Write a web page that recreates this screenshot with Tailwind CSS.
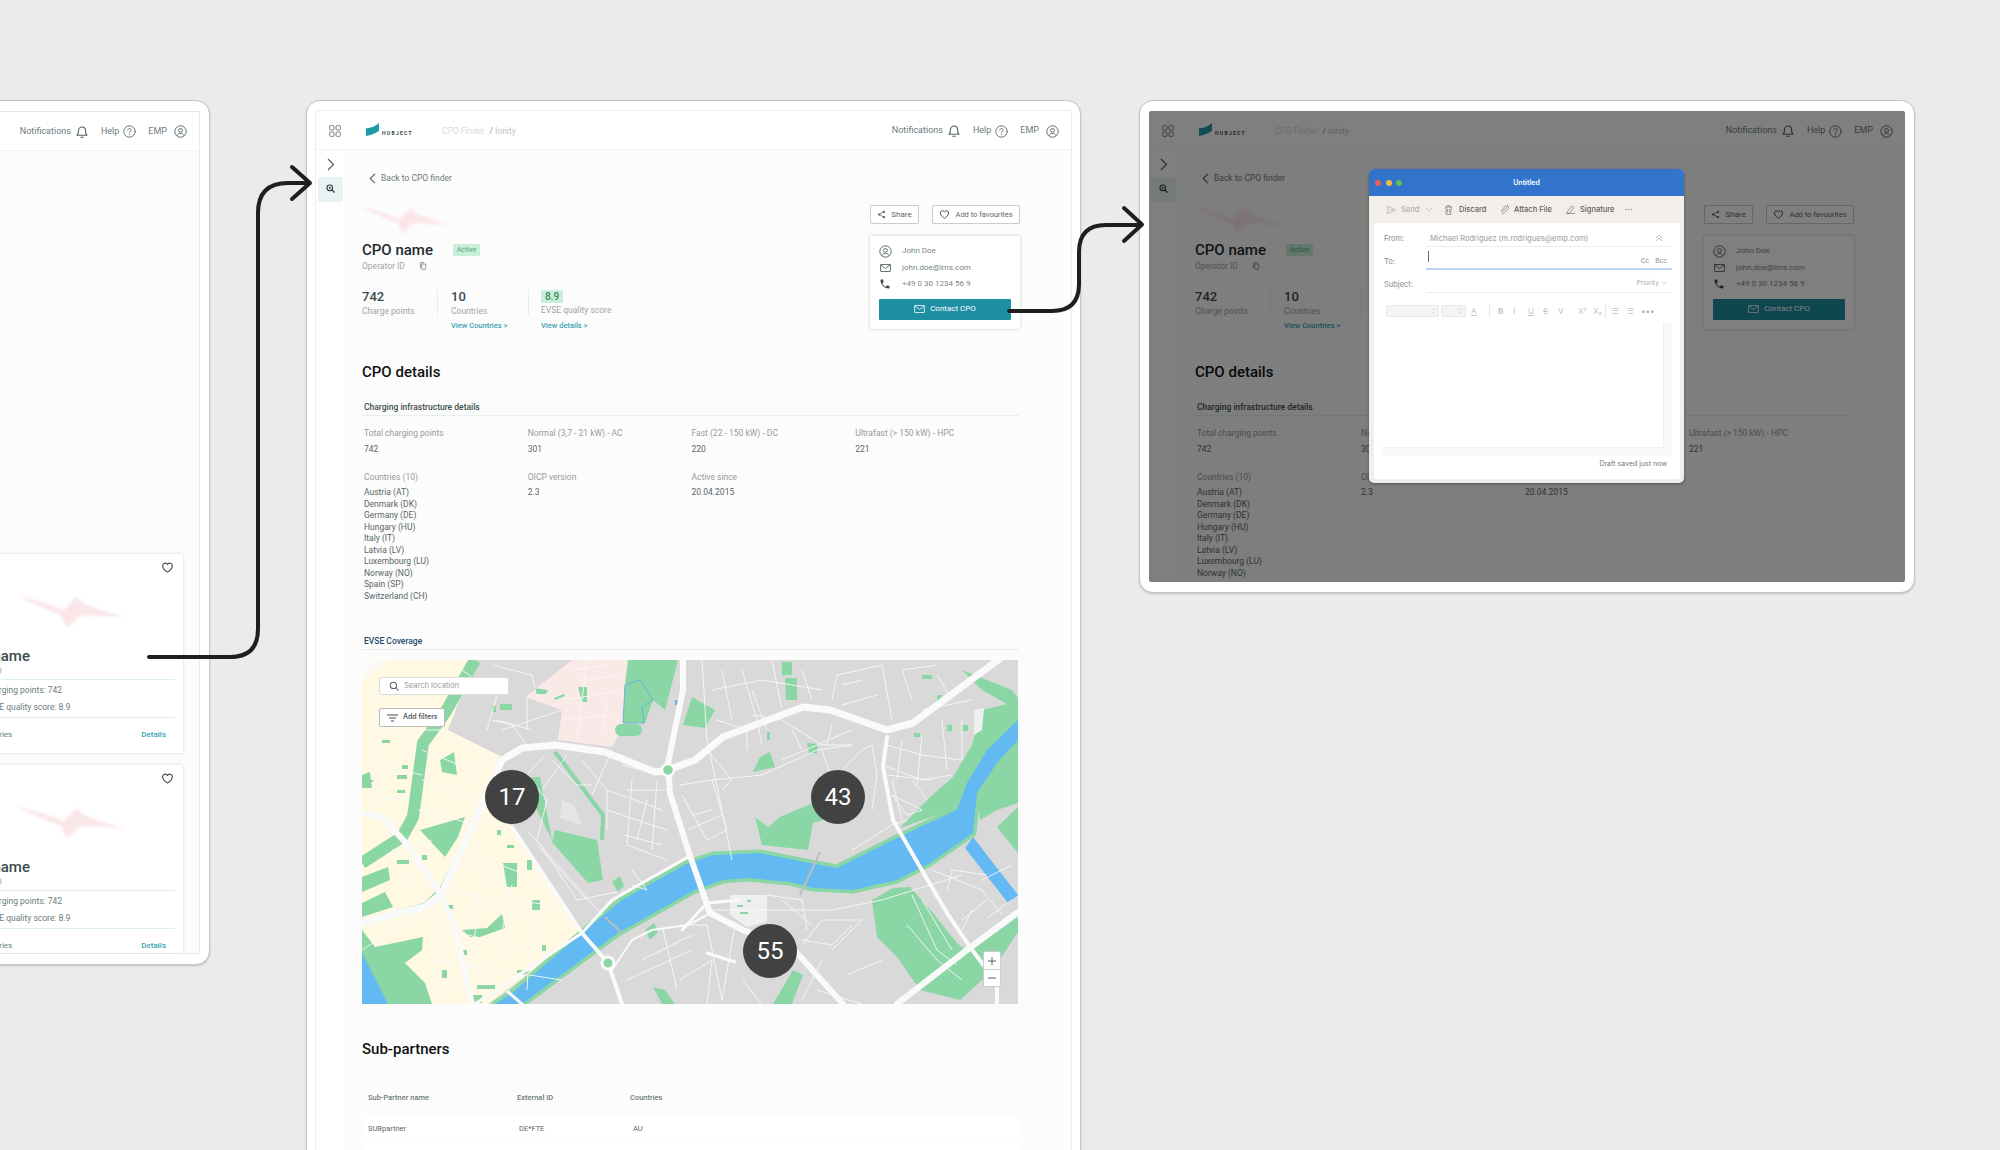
<!DOCTYPE html>
<html>
<head>
<meta charset="utf-8">
<script src="https://cdn.jsdelivr.net/npm/@tailwindcss/browser@4"></script>
</head>
<body class="m-0 bg-[#ebebeb] font-['Roboto',sans-serif]">
<svg class="absolute w-0 h-0">
  <symbol id="i-grid" viewBox="0 0 12 12"><g fill="none" stroke="#6b7476" stroke-width="0.9"><rect x="0.6" y="0.6" width="4.4" height="4.4" rx="1.2"/><rect x="7" y="0.6" width="4.4" height="4.4" rx="1.2"/><rect x="0.6" y="7" width="4.4" height="4.4" rx="1.2"/><rect x="7" y="7" width="4.4" height="4.4" rx="1.2"/></g></symbol>
  <symbol id="i-bell" viewBox="0 0 24 24"><g fill="none" stroke="#52605f" stroke-width="1.9" stroke-linecap="round" stroke-linejoin="round"><path d="M6 9.5a6 6 0 0 1 12 0c0 6 2.5 8 2.5 8h-17S6 15.500 6 9.500"/><path d="M10 21h4"/></g></symbol>
  <symbol id="i-help" viewBox="0 0 24 24"><g fill="none" stroke="#52605f" stroke-width="1.6" stroke-linecap="round"><circle cx="12" cy="12" r="10.500"/><path d="M9 9.300a3 3 0 1 1 4.500 2.600c-1 .6-1.500 1.200-1.500 2.300"/></g><circle cx="12" cy="17.300" r="1" fill="#52605f"/></symbol>
  <symbol id="i-user" viewBox="0 0 24 24"><g fill="none" stroke="#52605f" stroke-width="1.700"><circle cx="12" cy="12" r="10.500"/><circle cx="12" cy="10" r="3.500"/><path d="M5.500 19.500c1.500-2.700 3.800-4 6.500-4s5 1.300 6.500 4"/></g></symbol>
  <symbol id="i-heart" viewBox="0 0 24 24"><path d="M12 20.500S3 15 3 8.800A4.800 4.800 0 0 1 12 6.500a4.800 4.800 0 0 1 9 2.300C21 15 12 20.500 12 20.500z" fill="none" stroke="#3b4648" stroke-width="2" stroke-linejoin="round"/></symbol>
  <symbol id="i-share" viewBox="0 0 24 24"><g fill="none" stroke="#52605f" stroke-width="2"><path d="M18 5 6 12l12 7"/></g><g fill="#52605f"><circle cx="18.500" cy="5" r="3"/><circle cx="5.500" cy="12" r="3"/><circle cx="18.500" cy="19" r="3"/></g></symbol>
  <symbol id="i-mail" viewBox="0 0 24 18"><g fill="none" stroke="currentColor" stroke-width="1.800"><rect x="1" y="1" width="22" height="16" rx="1"/><path d="m1.500 2 10.500 8 10.500-8"/></g></symbol>
  <symbol id="i-phone" viewBox="0 0 24 24"><path fill="#3b4648" d="M6.620 10.790c1.440 2.830 3.760 5.140 6.590 6.590l2.200-2.200c.27-.27.67-.36 1.020-.24 1.120.37 2.330.57 3.570.57.55 0 1 .45 1 1V20c0 .55-.45 1-1 1-9.390 0-17-7.610-17-17 0-.55.45-1 1-1h3.500c.55 0 1 .45 1 1 0 1.250.2 2.450.57 3.570.11.35.03.74-.25 1.020l-2.200 2.200z"/></symbol>
  <symbol id="i-copy" viewBox="0 0 24 24"><g fill="none" stroke="#6b7476" stroke-width="2.200"><rect x="8" y="6" width="12" height="16" rx="1.500"/><path d="M4 18V2h11"/></g></symbol>
  <symbol id="i-zoom" viewBox="0 0 24 24"><g fill="none" stroke="#2d3a3c" stroke-width="3" stroke-linecap="round"><circle cx="10" cy="10" r="7.500"/><path d="m16 16 6 6"/></g><circle cx="10" cy="10" r="2.500" fill="#2d3a3c"/></symbol>
  <symbol id="i-bird" viewBox="0 0 88 30"><path fill="#fbe6e9" d="M0 3C14 8 28 11 38 16 42 12 46 7 49 5 53 13 70 16 88 22 72 21 58 20 50 21 47 25 44 28 41 30 38 27 38 23 36 20 24 15 9 10 0 3Z"/></symbol>
  <symbol id="i-logo" viewBox="0 0 13 13"><path fill="#1e9aa6" d="M0 5.500C5 5 10 3 13 0v8C9 10.500 5 12 0 13z"/></symbol>
  <symbol id="i-updown" viewBox="0 0 5 8"><path d="M1 3 2.500 1.500 4 3M1 5l1.500 1.500L4 5" fill="none" stroke="#c4c4c4" stroke-width="0.600"/></symbol>
</svg>

<div class="relative w-[2000px] h-[1150px] overflow-hidden bg-[#ebebeb]">

  <!-- LEFT FRAME -->
  <div class="absolute left-[-100px] top-[100px] w-[310px] h-[865px] bg-white rounded-[14px] border border-[#c6c6c6] shadow-[0_1px_2px_rgba(0,0,0,0.2)] px-[9px] py-[10px]">
    <div class="w-full h-full border border-[#e8e8e8] bg-[#fcfcfc] overflow-hidden flex flex-col">
      <div class="h-[39px] shrink-0 bg-white border-b border-[#f2f2f2] flex items-center justify-end pr-[12px] pt-[1px] text-[9px] text-[#6e7b7d]">
        <span>Notifications</span><svg class="ml-[4px] w-[14px] h-[14px]"><use href="#i-bell"/></svg>
        <span class="ml-[12px]">Help</span><svg class="ml-[4px] w-[13px] h-[13px]"><use href="#i-help"/></svg>
        <span class="ml-[12px]">EMP</span><svg class="ml-[7px] w-[13px] h-[13px]"><use href="#i-user"/></svg>
      </div>
      <div class="flex-1 flex flex-col items-end pr-[16px] pt-[403px] gap-[12px]">
        <div class="shrink-0 w-[233px] h-[199px] bg-white rounded-[2px] shadow-[0_0_3px_rgba(0,0,0,0.18)]">
          <div class="h-[30px] flex justify-end items-center pr-[9px] pb-[3px]"><svg class="w-[13px] h-[13px]"><use href="#i-heart"/></svg></div>
          <svg class="ml-[67px] mt-[4px] w-[108px] h-[42px] blur-[1.5px]"><use href="#i-bird"/></svg>
          <div class="pl-[9px] mt-[16px] h-[20px] leading-[20px] text-[15px] font-medium text-[#3d4a4c] whitespace-nowrap">CPO name</div>
          <div class="pl-[9px] h-[10px] leading-[10px] text-[8.5px] text-[#a5a5a5] whitespace-nowrap">Operator ID</div>
          <div class="ml-[9px] mr-[8px] mt-[3px] border-t border-[#dceff2]"></div>
          <div class="pl-[34px] mt-[4px] h-[12px] leading-[12px] text-[8.5px] text-[#6e7b7d] whitespace-nowrap">Charging points: 742</div>
          <div class="pl-[34px] mt-[5px] h-[12px] leading-[12px] text-[8.5px] text-[#6e7b7d] whitespace-nowrap">EVSE quality score: 8.9</div>
          <div class="ml-[9px] mr-[8px] mt-[4px] border-t border-[#dceff2]"></div>
          <div class="pl-[9px] pr-[17px] mt-[11px] h-[12px] leading-[12px] text-[8px] flex justify-between whitespace-nowrap"><span class="text-[#6e7b7d] pl-[8px]">10 Countries</span><span class="text-[#3aa3b5] font-medium">Details</span></div>
        </div>
        <div class="shrink-0 w-[233px] h-[199px] bg-white rounded-[2px] shadow-[0_0_3px_rgba(0,0,0,0.18)]">
          <div class="h-[30px] flex justify-end items-center pr-[9px] pb-[3px]"><svg class="w-[13px] h-[13px]"><use href="#i-heart"/></svg></div>
          <svg class="ml-[67px] mt-[4px] w-[108px] h-[42px] blur-[1.5px]"><use href="#i-bird"/></svg>
          <div class="pl-[9px] mt-[16px] h-[20px] leading-[20px] text-[15px] font-medium text-[#3d4a4c] whitespace-nowrap">CPO name</div>
          <div class="pl-[9px] h-[10px] leading-[10px] text-[8.5px] text-[#a5a5a5] whitespace-nowrap">Operator ID</div>
          <div class="ml-[9px] mr-[8px] mt-[3px] border-t border-[#dceff2]"></div>
          <div class="pl-[34px] mt-[4px] h-[12px] leading-[12px] text-[8.5px] text-[#6e7b7d] whitespace-nowrap">Charging points: 742</div>
          <div class="pl-[34px] mt-[5px] h-[12px] leading-[12px] text-[8.5px] text-[#6e7b7d] whitespace-nowrap">EVSE quality score: 8.9</div>
          <div class="ml-[9px] mr-[8px] mt-[4px] border-t border-[#dceff2]"></div>
          <div class="pl-[9px] pr-[17px] mt-[11px] h-[12px] leading-[12px] text-[8px] flex justify-between whitespace-nowrap"><span class="text-[#6e7b7d] pl-[8px]">10 Countries</span><span class="text-[#3aa3b5] font-medium">Details</span></div>
        </div>
      </div>
    </div>
  </div>

  <!-- MIDDLE FRAME -->
  <div class="absolute left-[306px] top-[100px] w-[775px] h-[1100px] bg-white rounded-[14px] border border-[#c6c6c6] shadow-[0_1px_2px_rgba(0,0,0,0.2)] px-[9px] py-[10px]">
    <div class="w-full h-full outline outline-[#eeeeee] bg-[#fcfcfc] overflow-hidden flex flex-col">
      <div class="h-[39px] shrink-0 bg-white border-b border-[#f2f2f2] flex items-center pl-[13px] pr-[12px] pt-[2px] text-[9px] text-[#6e7b7d]">
        <svg class="w-[12px] h-[12px]"><use href="#i-grid"/></svg>
        <svg class="ml-[25px] w-[13px] h-[13px] mb-[3px]"><use href="#i-logo"/></svg>
        <span class="ml-[3px] mt-[5px] w-[35px] text-[5px] font-bold tracking-[1.3px] text-[#33464a] whitespace-nowrap">HUBJECT</span>
        <span class="ml-[25px] text-[8.5px] text-[#dadada] whitespace-nowrap">CPO Finder</span><span class="ml-[5px] text-[8.5px] text-[#888888]">/</span><span class="ml-[2px] text-[8.5px] text-[#c4c4c4]">Ionity</span>
        <span class="ml-auto">Notifications</span><svg class="ml-[4px] w-[14px] h-[14px]"><use href="#i-bell"/></svg>
        <span class="ml-[12px]">Help</span><svg class="ml-[4px] w-[13px] h-[13px]"><use href="#i-help"/></svg>
        <span class="ml-[12px]">EMP</span><svg class="ml-[7px] w-[13px] h-[13px]"><use href="#i-user"/></svg>
      </div>
      <div class="flex-1 flex">
        <div class="w-[29px] shrink-0 bg-white flex flex-col items-center pt-[8px]">
          <svg class="w-[9px] h-[13px]" viewBox="0 0 9 13"><path d="m2 1 5.500 5.500L2 12" fill="none" stroke="#52605f" stroke-width="1.200"/></svg>
          <div class="mt-[6px] w-[25px] h-[25px] bg-[#e8f2f2] rounded-[2px] flex items-center justify-center pb-[2px]"><svg class="w-[9px] h-[9px]"><use href="#i-zoom"/></svg></div>
        </div>
        <div class="flex-1 pl-[17px] pr-[52px] text-[8.5px]">
          <div class="h-[161px] mt-[21px] flex justify-between">
            <div>
              <div class="h-[14px] flex items-center pl-[7px] text-[#6e7b7d]"><svg class="w-[7px] h-[11px]" viewBox="0 0 7 11"><path d="M6 .8 1.200 5.500 6 10.200" fill="none" stroke="#52605f" stroke-width="1.100"/></svg><span class="ml-[5px] whitespace-nowrap">Back to CPO finder</span></div>
              <svg class="mt-[18px] w-[88px] h-[30px] blur-[1.5px]"><use href="#i-bird"/></svg>
              <div class="mt-[7px] h-[20px] flex items-center"><span class="text-[15px] font-medium text-[#1f2b2e] whitespace-nowrap">CPO name</span><span class="ml-[20px] h-[12px] w-[27px] bg-[#c9eeda] rounded-[1px] text-center text-[7px] leading-[12px] text-[#6cb58c] font-medium">Active</span></div>
              <div class="h-[12px] flex items-center text-[#a5a5a5]"><span class="whitespace-nowrap">Operator ID</span><svg class="ml-[14px] w-[8px] h-[8px]"><use href="#i-copy"/></svg></div>
              <div class="mt-[18px] flex whitespace-nowrap">
                <div class="w-[76px]"><div class="h-[26px] border-r border-[#e6eeee]"><div class="h-[14px] leading-[14px] text-[13px] font-medium text-[#3d4a4c]">742</div><div class="h-[12px] leading-[14px] text-[#a5a5a5]">Charge points</div></div></div>
                <div class="w-[91px] pl-[13px] relative"><div class="h-[26px] border-r border-[#e6eeee]"><div class="h-[14px] leading-[14px] text-[13px] font-medium text-[#3d4a4c]">10</div><div class="h-[12px] leading-[14px] text-[#a5a5a5]">Countries</div></div><div class="mt-[4px] h-[12px] leading-[12px] text-[7.5px] text-[#3aa3b5] font-medium">View Countries &gt;</div></div>
                <div class="pl-[12px]"><div class="h-[26px]"><div class="h-[13px] w-[22px] bg-[#c9eeda] rounded-[1px] text-center leading-[13px] text-[10px] font-medium text-[#3d8b5e]">8.9</div><div class="h-[13px] leading-[15px] text-[#a5a5a5]">EVSE quality score</div></div><div class="mt-[4px] h-[12px] leading-[12px] text-[7.5px] text-[#3aa3b5] font-medium">View details &gt;</div></div>
              </div>
            </div>
            <div class="w-[150px] -mr-[1px] mt-[34px]">
              <div class="flex justify-between h-[19px] text-[#5a6668] whitespace-nowrap">
                <div class="w-[49px] bg-white border border-[#cccccc] rounded-[1px] flex items-center justify-center gap-[5px] text-[8px]"><svg class="w-[9px] h-[9px]"><use href="#i-share"/></svg>Share</div>
                <div class="w-[88px] bg-white border border-[#cccccc] rounded-[1px] flex items-center justify-center gap-[5px] text-[7.5px]"><svg class="w-[11px] h-[11px]"><use href="#i-heart"/></svg>Add to favourites</div>
              </div>
              <div class="mt-[12px] h-[93px] bg-white rounded-[1px] shadow-[0_0_3px_rgba(0,0,0,0.22)] px-[9px] pt-[7px] text-[8px] text-[#7a8688]">
                <div class="h-[16.500px] flex items-center"><svg class="w-[13px] h-[13px]"><use href="#i-user"/></svg><span class="ml-[10px]">John Doe</span></div>
                <div class="h-[16.500px] flex items-center text-[#3b4648]"><svg class="ml-[1px] w-[11px] h-[8px]"><use href="#i-mail"/></svg><span class="ml-[11px] text-[#7a8688]">john.doe@lms.com</span></div>
                <div class="h-[16.500px] flex items-center"><svg class="w-[12px] h-[12px]"><use href="#i-phone"/></svg><span class="ml-[11px]">+49 0 30 1234 56 9</span></div>
                <div class="mt-[6px] h-[21px] bg-[#1f8fa3] rounded-[1px] flex items-center justify-center gap-[5px] text-white text-[8px]"><svg class="w-[11px] h-[8px]"><use href="#i-mail"/></svg>Contact CPO</div>
              </div>
            </div>
          </div>

          <div class="mt-[30px] h-[20px] leading-[20px] text-[15px] font-medium text-[#111111]">CPO details</div>
          <div class="mt-[19px] h-[15px] leading-[12px] pl-[2px] border-b border-[#e6eeee] font-medium text-[#3d4d50]">Charging infrastructure details</div>
          <div class="mt-[11px] grid grid-cols-4 pl-[2px] leading-[12px] text-[#9a9a9a]"><div>Total charging points</div><div>Normal (3,7 - 21 kW) - AC</div><div>Fast (22 - 150 kW) - DC</div><div>Ultrafast (&gt; 150 kW) - HPC</div></div>
          <div class="mt-[4px] grid grid-cols-4 pl-[2px] leading-[12px] text-[#5a6668]"><div>742</div><div>301</div><div>220</div><div>221</div></div>
          <div class="mt-[16px] grid grid-cols-4 pl-[2px] leading-[12px] text-[#9a9a9a]"><div>Countries (10)</div><div>OICP version</div><div>Active since</div></div>
          <div class="mt-[4px] grid grid-cols-4 pl-[2px] leading-[11.500px] text-[#5a6668]"><div>Austria (AT)<br>Denmark (DK)<br>Germany (DE)<br>Hungary (HU)<br>Italy (IT)<br>Latvia (LV)<br>Luxembourg (LU)<br>Norway (NO)<br>Spain (SP)<br>Switzerland (CH)</div><div>2.3</div><div>20.04.2015</div></div>
          <div class="mt-[33px] h-[15px] leading-[12px] pl-[2px] border-b border-[#e6eeee] font-medium text-[#1f4a6b]">EVSE Coverage</div>

          <div class="relative mt-[10px] w-[656px] h-[344px] overflow-hidden bg-[#d9d9d9]">
            <svg class="absolute inset-0" width="656" height="344" viewBox="0 0 656 344">
              <polygon fill="#f9e9e7" points="163,37 210,0 270,0 263,63 250,87 196,80 200,50"/>
              <polygon fill="#fff8e3" points="0,0 113,0 86,70 140,97 123,133 150,167 220,273 126,344 0,344"/>
              <polygon fill="#fbfbf6" points="0,0 28,0 0,20"/>
              <g fill="#8ad7a5">
                <polygon points="58,170 103,157 96,177 83,197"/>
                <polygon points="0,217 26,207 28,220 0,232"/>
                <polygon points="0,243 23,232 31,247 0,257"/>
                <polygon points="0,270 13,287 61,277 60,290 43,303 63,323 70,344 26,344 0,297"/>
                <polygon points="141,203 155,203 155,227 145,227"/>
                <polygon points="100,270 125,268 140,254 143,268 118,277 108,277"/>
                <polygon points="78,100 92,92 95,115 80,112"/>
                <polygon points="0,115 8,112 10,128 0,128"/>
                <rect x="4" y="120" width="8" height="2"/><rect x="35" y="115" width="10" height="4"/><rect x="35" y="130" width="8" height="3"/><rect x="20" y="80" width="8" height="3"/><rect x="40" y="105" width="6" height="4"/>
                <rect x="35" y="200" width="12" height="4"/><rect x="60" y="195" width="5" height="5"/><rect x="145" y="185" width="7" height="3"/><rect x="165" y="200" width="5" height="10"/><rect x="170" y="240" width="8" height="10"/><rect x="100" y="290" width="5" height="5"/><rect x="80" y="310" width="5" height="8"/><rect x="115" y="325" width="18" height="4"/><rect x="110" y="335" width="10" height="8"/><rect x="195" y="305" width="5" height="8"/><rect x="180" y="285" width="4" height="6"/><rect x="155" y="310" width="12" height="5"/><rect x="85" y="245" width="6" height="4"/><rect x="135" y="170" width="4" height="5"/>
                <polygon points="170,117 178,117 190,180 175,150"/>
                <polygon points="190,182 193,170 235,180 241,220 226,223"/>
                <polygon points="266,0 316,0 303,50 291,40 283,63 261,63 263,25"/>
                <rect x="253" y="64" width="27" height="12" rx="6"/>
                <polygon points="216,27 225,27 225,42 220,42"/>
                <polygon points="192,38 202,34 203,36 193,40"/>
                <polygon points="172,28 186,30 184,34 174,34"/>
                <rect x="130" y="46" width="4" height="6"/><rect x="138" y="44" width="12" height="6"/>
                <polygon points="250,222 258,216 262,226 256,232"/>
                <polygon points="393,157 406,167 418,157 451,143 461,160 451,163 446,190 400,185"/>
                <polygon points="538,168 568,137 591,117 610,85 620,50 645,44 620,30 600,10 650,30 656,38 656,80 625,90 590,150"/>
                <polygon points="615,133 656,80 656,143 635,150 618,160"/>
                <polygon points="635,167 656,147 656,193"/>
                <polygon points="510,240 531,228 548,227 571,253 595,283 611,297 631,310 598,340 558,330 535,297 515,277"/>
                <polygon points="605,293 656,257 656,272 631,310"/>
                <polygon points="431,310 441,315 430,344 411,344"/>
                <polygon points="330,37 353,50 343,68 321,65"/>
                <polygon points="423,18 435,18 435,40 424,40"/>
                <polygon points="420,2 430,2 430,15 420,15"/>
                <polygon points="391,112 398,97 408,92 413,107"/>
                <polygon points="445,83 456,84 455,93 447,93"/>
                <polygon points="283,270 292,263 296,272 288,280"/>
                <polygon points="291,327 303,330 313,344 300,344"/>
                <rect x="575" y="35" width="5" height="6"/><rect x="585" y="65" width="5" height="6"/><rect x="552" y="73" width="6" height="4"/><rect x="560" y="15" width="10" height="4"/><rect x="405" y="72" width="3" height="8"/><rect x="600" y="65" width="6" height="6"/>
              </g>
              <g fill="none" stroke="#8ad7a5" stroke-linejoin="round">
                <polyline stroke-width="12" points="113,0 83,53 61,83 51,157 40,177 0,203"/>
                <polyline stroke-width="4" points="193,92 241,155 240,180"/>
                <polyline stroke-width="4" points="113,160 80,228 63,245 35,252"/>
                <polygon stroke-width="7" points="133,344 150,333 220,273 260,240 326,203 351,195 398,193 448,203 475,208 505,193 535,178 558,167 595,150 605,123 625,90 656,60 656,80 635,103 615,133 611,173 591,187 568,203 535,220 491,230 451,228 428,222 385,218 361,220 333,230 256,273 160,344"/>
              </g>
              <g fill="#63b9f1">
                <polygon points="133,344 150,333 220,273 260,240 326,203 351,195 398,193 448,203 475,208 505,193 535,178 558,167 595,150 605,123 625,90 656,60 656,80 635,103 615,133 611,173 591,187 568,203 535,220 491,230 451,228 428,222 385,218 361,220 333,230 256,273 160,344"/>
                <polygon points="603,188 611,177 656,235 646,243"/>
                <polygon points="0,293 26,344 0,344"/>
                <rect x="313" y="40" width="7" height="5"/>
              </g>
              <polygon points="263,25 278,20 291,40 280,47 282,63 261,63" fill="#8ad7a5" stroke="#5ba8ee" stroke-width="0.800"/>
              <polygon points="368,235 405,235 405,262 385,267 368,255" fill="#eef0ef"/>
              <polygon points="612,50 622,48 620,70 612,75" fill="#eef0ef"/>
              <polygon points="200,140 212,145 220,165 198,158" fill="#e4e6e5"/>
              <g fill="#8ad7a5"><rect x="375" y="245" width="6" height="2"/><rect x="385" y="240" width="4" height="2"/><rect x="378" y="252" width="8" height="2"/></g>
              <g fill="none" stroke="#f8f8f8" stroke-width="0.900" stroke-linejoin="round">
                <polyline points="0,60 40,70 86,70"/><polyline points="20,0 15,60 10,150"/><polyline points="60,90 110,110 120,130"/><polyline points="60,120 112,140"/><polyline points="56,150 115,165"/><polyline points="30,190 70,180"/><polyline points="0,290 60,250"/><polyline points="90,230 170,260"/><polyline points="100,190 190,225"/><polyline points="120,210 110,300"/><polyline points="150,225 130,320"/><polyline points="170,240 165,330"/><polyline points="85,270 190,295"/><polyline points="70,300 200,320"/><polyline points="0,100 60,115"/><polyline points="0,135 45,140"/><polyline points="60,190 50,230"/><polyline points="90,205 140,215"/><polyline points="105,235 190,245"/><polyline points="75,240 70,330"/><polyline points="95,280 85,340"/><polyline points="115,190 160,250"/><polyline points="50,30 40,100"/><polyline points="0,30 70,40"/>
                <polyline points="130,60 150,65 165,85"/><polyline points="100,10 135,35 125,70"/><polyline points="140,70 165,62 200,50"/><polyline points="205,40 260,30"/><polyline points="200,60 250,55"/><polyline points="225,0 215,80"/><polyline points="183,95 165,115 185,140 175,180 215,240"/><polyline points="205,95 180,130"/><polyline points="220,100 245,130 245,170"/><polyline points="250,90 230,135"/><polyline points="245,130 300,150"/><polyline points="245,150 305,170"/><polyline points="270,120 265,185 305,200"/><polyline points="295,120 290,190"/><polyline points="260,105 300,115"/><polyline points="215,240 255,232"/><polyline points="165,170 240,255"/><polyline points="175,185 225,240"/><polyline points="190,100 215,125 230,125"/><polyline points="130,5 170,15 175,38"/><polyline points="165,38 165,70"/><polyline points="135,60 170,70"/><polyline points="210,10 245,5"/><polyline points="218,20 260,15"/><polyline points="240,75 245,40"/><polyline points="310,130 265,130"/><polyline points="262,175 300,185"/><polyline points="285,140 275,180"/><polyline points="270,210 285,230 270,225"/><polyline points="280,300 330,275"/><polyline points="265,320 330,290"/><polyline points="300,265 315,330"/>
                <polyline points="340,0 345,80 360,150 370,200"/><polyline points="318,125 350,120 400,115 455,90 490,85"/><polyline points="345,90 370,120 360,130"/><polyline points="320,135 345,180 365,170 350,120"/><polyline points="326,170 360,155"/><polyline points="330,155 350,150"/><polyline points="380,10 395,60 400,85"/><polyline points="350,30 400,20 460,30"/><polyline points="390,55 420,60 460,85 490,85"/><polyline points="420,100 490,70"/><polyline points="470,40 475,15 520,5 530,60"/><polyline points="460,90 470,120 500,90"/><polyline points="500,90 510,85 515,115 510,150"/><polyline points="520,105 560,120 590,115"/><polyline points="525,85 560,95 600,100"/><polyline points="540,80 535,120"/><polyline points="560,75 555,125"/><polyline points="580,60 585,110"/><polyline points="560,50 610,40"/><polyline points="550,40 540,10 575,5"/><polyline points="600,60 600,100"/><polyline points="530,135 560,150 545,155 530,135"/><polyline points="360,10 370,60"/><polyline points="410,0 420,50"/><polyline points="390,30 405,70"/><polyline points="440,10 450,40"/><polyline points="480,25 500,20"/><polyline points="480,45 515,35"/><polyline points="355,60 385,70 385,90"/><polyline points="430,70 440,90"/><polyline points="470,65 465,85"/><polyline points="525,115 570,120"/><polyline points="530,120 540,160"/><polyline points="550,120 565,140"/><polyline points="575,15 590,40"/>
                <polyline points="318,265 345,265 360,340"/><polyline points="340,250 470,250 520,240 600,215"/><polyline points="360,340 372,270"/><polyline points="440,285 460,260 500,260 470,290"/><polyline points="485,315 520,300"/><polyline points="560,240 590,290"/><polyline points="570,210 620,230 640,255"/><polyline points="585,230 590,210 625,215"/><polyline points="600,260 625,240"/><polyline points="545,265 575,300 600,320"/><polyline points="550,235 575,290 595,305"/><polyline points="420,240 450,265"/><polyline points="455,330 500,344"/><polyline points="318,320 350,300 345,344"/><polyline points="380,320 400,344"/><polyline points="460,300 440,340"/><polyline points="405,235 440,240 445,270"/><polyline points="440,280 470,285 490,265"/><polyline points="490,190 530,165 545,160"/><polyline points="620,220 650,205"/><polyline points="610,250 600,270"/><polyline points="625,258 650,240"/>
              </g>
              <g fill="none" stroke="#fafafa" stroke-linejoin="round" stroke-linecap="round">
                <polyline stroke-width="6" points="0,153 20,157 43,182 76,230 93,267 110,344"/>
                <polyline stroke-width="7" points="0,263 36,253 63,247 80,233 113,160 140,100 160,88 193,85 243,92 293,112 306,110 333,100 361,77 441,47 468,50 525,70 551,63 640,-3"/>
                <polyline stroke-width="6" points="321,0 321,30 306,103 308,133 326,190 348,253 381,270 435,293 481,344"/>
                <polyline stroke-width="4" points="150,167 220,273 246,303 260,344"/>
                <polyline stroke-width="3" points="113,344 220,273 250,240 326,197"/>
                <polyline stroke-width="3" points="146,332 160,344"/>
                <polyline stroke-width="2" points="250,310 270,280 290,270 326,265 345,255"/>
                <polyline stroke-width="4" points="525,77 521,107 531,160 558,207 585,253 608,287 635,323 635,344"/>
                <polyline stroke-width="6" points="535,344 605,290 656,252"/>
                <polyline stroke-width="3" points="345,293 373,302"/>
                <polyline stroke-width="3" points="320,270 345,243 378,240"/>
                <circle cx="246" cy="303" r="6" stroke-width="3" fill="#8ad7a5"/>
                <circle cx="306" cy="110" r="6" stroke-width="2.500" fill="#8ad7a5"/>
              </g>
              <g fill="none" stroke="#bdbdbd" stroke-width="2"><line x1="243" y1="257" x2="260" y2="273"/><line x1="458" y1="192" x2="438" y2="235"/></g>
            </svg>
            <div class="absolute left-[17px] top-[17px] w-[130px] h-[18px] bg-white rounded-[3px] border border-[#dddddd] flex items-center pl-[9px] font-['Inter',sans-serif] text-[7.5px] text-[#999999]"><svg class="w-[10px] h-[10px]" viewBox="0 0 24 24"><g fill="none" stroke="#5a6668" stroke-width="2.500" stroke-linecap="round"><circle cx="10.500" cy="10.500" r="7.500"/><path d="m16 16 6 6"/></g></svg><span class="ml-[5px] whitespace-nowrap">Search location</span></div>
            <div class="absolute left-[17px] top-[48px] w-[66px] h-[19px] bg-white rounded-[2px] border border-[#bbbbbb] flex items-center pl-[7px] font-['Inter',sans-serif] text-[7px] font-medium text-[#3d4a4c]"><svg class="w-[11px] h-[8px]" viewBox="0 0 11 8"><path d="M0 1h11M2 4h7M4 7h3" stroke="#3d4a4c" stroke-width="1"/></svg><span class="ml-[5px] whitespace-nowrap">Add filters</span></div>
            <div class="absolute left-[123px] top-[110px] w-[54px] h-[54px] rounded-full bg-[#424242] flex items-center justify-center text-white text-[24px]">17</div>
            <div class="absolute left-[449px] top-[110px] w-[54px] h-[54px] rounded-full bg-[#424242] flex items-center justify-center text-white text-[24px]">43</div>
            <div class="absolute left-[381px] top-[264px] w-[54px] h-[54px] rounded-full bg-[#424242] flex items-center justify-center text-white text-[24px]">55</div>
            <div class="absolute left-[621px] top-[291px] w-[18px] h-[36px] bg-white rounded-[2px] border border-[#cccccc] flex flex-col text-[#5a6668]">
              <div class="h-[18px] border-b border-[#cccccc] flex items-center justify-center"><svg class="w-[8px] h-[8px]" viewBox="0 0 8 8"><path d="M4 0v8M0 4h8" stroke="#5a6668" stroke-width="1"/></svg></div>
              <div class="flex-1 flex items-center justify-center"><svg class="w-[8px] h-[8px]" viewBox="0 0 8 8"><path d="M0 4h8" stroke="#5a6668" stroke-width="1"/></svg></div>
            </div>
          </div>

          <div class="mt-[35px] h-[20px] leading-[20px] text-[15px] font-medium text-[#111111]">Sub-partners</div>
          <div class="mt-[33px] h-[12px] leading-[12px] flex text-[7.5px] font-medium text-[#6e7b7d]"><span class="ml-[6px] w-[149px]">Sub-Partner name</span><span class="w-[113px]">External ID</span><span>Countries</span></div>
          <div class="mt-[13px] h-[23px] bg-white rounded-[1px] flex items-center text-[7.5px] text-[#5a6668]"><span class="ml-[6px] w-[151px]">SUBpartner</span><span class="w-[114px]">DE*FTE</span><span>AU</span></div>
          <div class="mt-[3px] h-[23px] bg-white rounded-[1px]"></div>
        </div>
      </div>
    </div>
  </div>

  <!-- RIGHT FRAME -->
  <div class="absolute left-[1139px] top-[100px] w-[776px] h-[493px] bg-white rounded-[14px] border border-[#c6c6c6] shadow-[0_1px_2px_rgba(0,0,0,0.2)] px-[9px] py-[10px]">
    <div class="relative w-full h-full rounded-[2px] bg-[#fcfcfc] overflow-hidden flex flex-col">
      <div class="h-[39px] shrink-0 bg-white border-b border-[#f2f2f2] flex items-center pl-[13px] pr-[12px] pt-[2px] text-[9px] text-[#6e7b7d]">
        <svg class="w-[12px] h-[12px]"><use href="#i-grid"/></svg>
        <svg class="ml-[25px] w-[13px] h-[13px] mb-[3px]"><use href="#i-logo"/></svg>
        <span class="ml-[3px] mt-[5px] w-[35px] text-[5px] font-bold tracking-[1.3px] text-[#33464a] whitespace-nowrap">HUBJECT</span>
        <span class="ml-[25px] text-[8.5px] text-[#dadada] whitespace-nowrap">CPO Finder</span><span class="ml-[5px] text-[8.5px] text-[#888888]">/</span><span class="ml-[2px] text-[8.5px] text-[#c4c4c4]">Ionity</span>
        <span class="ml-auto">Notifications</span><svg class="ml-[4px] w-[14px] h-[14px]"><use href="#i-bell"/></svg>
        <span class="ml-[12px]">Help</span><svg class="ml-[4px] w-[13px] h-[13px]"><use href="#i-help"/></svg>
        <span class="ml-[12px]">EMP</span><svg class="ml-[7px] w-[13px] h-[13px]"><use href="#i-user"/></svg>
      </div>
      <div class="flex-1 flex">
        <div class="w-[29px] shrink-0 bg-white flex flex-col items-center pt-[8px]">
          <svg class="w-[9px] h-[13px]" viewBox="0 0 9 13"><path d="m2 1 5.500 5.500L2 12" fill="none" stroke="#52605f" stroke-width="1.200"/></svg>
          <div class="mt-[6px] w-[25px] h-[25px] bg-[#e8f2f2] rounded-[2px] flex items-center justify-center pb-[2px]"><svg class="w-[9px] h-[9px]"><use href="#i-zoom"/></svg></div>
        </div>
        <div class="flex-1 pl-[17px] pr-[52px] text-[8.5px]">
          <div class="h-[161px] mt-[21px] flex justify-between">
            <div>
              <div class="h-[14px] flex items-center pl-[7px] text-[#6e7b7d]"><svg class="w-[7px] h-[11px]" viewBox="0 0 7 11"><path d="M6 .8 1.200 5.500 6 10.200" fill="none" stroke="#52605f" stroke-width="1.100"/></svg><span class="ml-[5px] whitespace-nowrap">Back to CPO finder</span></div>
              <svg class="mt-[18px] w-[88px] h-[30px] blur-[1.5px]"><use href="#i-bird"/></svg>
              <div class="mt-[7px] h-[20px] flex items-center"><span class="text-[15px] font-medium text-[#1f2b2e] whitespace-nowrap">CPO name</span><span class="ml-[20px] h-[12px] w-[27px] bg-[#c9eeda] rounded-[1px] text-center text-[7px] leading-[12px] text-[#6cb58c] font-medium">Active</span></div>
              <div class="h-[12px] flex items-center text-[#a5a5a5]"><span class="whitespace-nowrap">Operator ID</span><svg class="ml-[14px] w-[8px] h-[8px]"><use href="#i-copy"/></svg></div>
              <div class="mt-[18px] flex whitespace-nowrap">
                <div class="w-[76px]"><div class="h-[26px] border-r border-[#e6eeee]"><div class="h-[14px] leading-[14px] text-[13px] font-medium text-[#3d4a4c]">742</div><div class="h-[12px] leading-[14px] text-[#a5a5a5]">Charge points</div></div></div>
                <div class="w-[91px] pl-[13px] relative"><div class="h-[26px] border-r border-[#e6eeee]"><div class="h-[14px] leading-[14px] text-[13px] font-medium text-[#3d4a4c]">10</div><div class="h-[12px] leading-[14px] text-[#a5a5a5]">Countries</div></div><div class="mt-[4px] h-[12px] leading-[12px] text-[7.5px] text-[#3aa3b5] font-medium">View Countries &gt;</div></div>
                <div class="pl-[12px]"><div class="h-[26px]"><div class="h-[13px] w-[22px] bg-[#c9eeda] rounded-[1px] text-center leading-[13px] text-[10px] font-medium text-[#3d8b5e]">8.9</div><div class="h-[13px] leading-[15px] text-[#a5a5a5]">EVSE quality score</div></div><div class="mt-[4px] h-[12px] leading-[12px] text-[7.5px] text-[#3aa3b5] font-medium">View details &gt;</div></div>
              </div>
            </div>
            <div class="w-[150px] -mr-[1px] mt-[34px]">
              <div class="flex justify-between h-[19px] text-[#5a6668] whitespace-nowrap">
                <div class="w-[49px] bg-white border border-[#cccccc] rounded-[1px] flex items-center justify-center gap-[5px] text-[8px]"><svg class="w-[9px] h-[9px]"><use href="#i-share"/></svg>Share</div>
                <div class="w-[88px] bg-white border border-[#cccccc] rounded-[1px] flex items-center justify-center gap-[5px] text-[7.5px]"><svg class="w-[11px] h-[11px]"><use href="#i-heart"/></svg>Add to favourites</div>
              </div>
              <div class="mt-[12px] h-[93px] bg-white rounded-[1px] shadow-[0_0_3px_rgba(0,0,0,0.22)] px-[9px] pt-[7px] text-[8px] text-[#7a8688]">
                <div class="h-[16.500px] flex items-center"><svg class="w-[13px] h-[13px]"><use href="#i-user"/></svg><span class="ml-[10px]">John Doe</span></div>
                <div class="h-[16.500px] flex items-center text-[#3b4648]"><svg class="ml-[1px] w-[11px] h-[8px]"><use href="#i-mail"/></svg><span class="ml-[11px] text-[#7a8688]">john.doe@lms.com</span></div>
                <div class="h-[16.500px] flex items-center"><svg class="w-[12px] h-[12px]"><use href="#i-phone"/></svg><span class="ml-[11px]">+49 0 30 1234 56 9</span></div>
                <div class="mt-[6px] h-[21px] bg-[#1f8fa3] rounded-[1px] flex items-center justify-center gap-[5px] text-white text-[8px]"><svg class="w-[11px] h-[8px]"><use href="#i-mail"/></svg>Contact CPO</div>
              </div>
            </div>
          </div>
          <div class="mt-[30px] h-[20px] leading-[20px] text-[15px] font-medium text-[#111111]">CPO details</div>
          <div class="mt-[19px] h-[15px] leading-[12px] pl-[2px] border-b border-[#e6eeee] font-medium text-[#3d4d50]">Charging infrastructure details</div>
          <div class="mt-[11px] grid grid-cols-4 pl-[2px] leading-[12px] text-[#9a9a9a]"><div>Total charging points</div><div>Normal (3,7 - 21 kW) - AC</div><div>Fast (22 - 150 kW) - DC</div><div>Ultrafast (&gt; 150 kW) - HPC</div></div>
          <div class="mt-[4px] grid grid-cols-4 pl-[2px] leading-[12px] text-[#5a6668]"><div>742</div><div>301</div><div>220</div><div>221</div></div>
          <div class="mt-[16px] grid grid-cols-4 pl-[2px] leading-[12px] text-[#9a9a9a]"><div>Countries (10)</div><div>OICP version</div><div>Active since</div></div>
          <div class="mt-[4px] grid grid-cols-4 pl-[2px] leading-[11.500px] text-[#5a6668]"><div>Austria (AT)<br>Denmark (DK)<br>Germany (DE)<br>Hungary (HU)<br>Italy (IT)<br>Latvia (LV)<br>Luxembourg (LU)<br>Norway (NO)</div><div>2.3</div><div>20.04.2015</div></div>
        </div>
      </div>

      <div class="absolute inset-0 bg-black/50"></div>

      <!-- compose window -->
      <div class="absolute left-[220px] top-[58px] w-[315px] h-[314px] bg-[#f3eeea] rounded-[5px] shadow-[0_1px_3px_rgba(0,0,0,0.35)] overflow-hidden font-['Inter',sans-serif]">
        <div class="relative h-[27px] bg-[#3273cc] flex items-center justify-center pt-[1px] text-white text-[7px] font-semibold">
          <span class="absolute left-[6px] top-[11px] w-[6px] h-[6px] rounded-full bg-[#ec5f57]"></span>
          <span class="absolute left-[17px] top-[11px] w-[6px] h-[6px] rounded-full bg-[#f5b93f]"></span>
          <span class="absolute left-[27px] top-[11px] w-[6px] h-[6px] rounded-full bg-[#5dc04e]"></span>
          Untitled
        </div>
        <div class="h-[27px] flex items-center text-[7.5px] font-medium text-[#5f5f5f] whitespace-nowrap">
          <svg class="ml-[17px] w-[10px] h-[10px]" viewBox="0 0 10 10"><path d="M1 1 9.500 5 1 9l1-4zM2 5h7" fill="none" stroke="#b5b5b5" stroke-width="0.700"/></svg>
          <span class="ml-[5px] w-[18px] text-[#b0b0b0]">Send</span>
          <svg class="ml-[6px] w-[8px] h-[5px]" viewBox="0 0 8 5"><path d="m1 1 3 3 3-3" fill="none" stroke="#b5b5b5" stroke-width="0.700"/></svg>
          <svg class="ml-[11px] w-[9px] h-[10px]" viewBox="0 0 9 10"><path d="M1 2h7M3 2V.8h3V2M1.800 2l.4 7.400h4.600L7.200 2M3.500 4v3.500M5.500 4v3.500" fill="none" stroke="#777777" stroke-width="0.700"/></svg>
          <span class="ml-[6px] w-[27px]">Discard</span>
          <svg class="ml-[14px] w-[9px] h-[10px]" viewBox="0 0 9 10"><path d="M7.500 1.500 2.500 6.500a1.200 1.200 0 0 0 1.700 1.700l4-4.500a2 2 0 0 0-3-2.700L1 6" fill="none" stroke="#777777" stroke-width="0.700"/></svg>
          <span class="ml-[5px] w-[37px]">Attach File</span>
          <svg class="ml-[14px] w-[11px] h-[10px]" viewBox="0 0 11 10"><path d="M1 8.500h9M2 7l5-6 2 1.500-4.500 5.500c-1 .5-2 .5-2.500-1z" fill="none" stroke="#777777" stroke-width="0.700"/></svg>
          <span class="ml-[4px] w-[33px]">Signature</span>
          <span class="ml-[12px] tracking-[0.5px]">···</span>
        </div>
        <div class="ml-[5px] mr-[4px] h-[256px] bg-white rounded-[3px] text-[7.5px] text-[#8a8a8a] relative">
          <div class="flex pl-[10px] pr-[8px] h-[24px]"><span class="w-[42px] pt-[11px] leading-[10px]">From:</span><div class="flex-1 border-b border-[#ececec] flex justify-between pl-[4px] pr-[9px] pt-[11px] leading-[10px] text-[#ababab] whitespace-nowrap"><span class="font-medium">Michael Rodriguez (m.rodrigues@emp.com)</span><svg class="w-[8px] h-[8px]" viewBox="0 0 8 8"><path d="m1 4 3-3 3 3M1 7l3-3 3 3" fill="none" stroke="#999999" stroke-width="0.700"/></svg></div></div>
          <div class="flex pl-[10px] pr-[8px] h-[23px]"><span class="w-[42px] pt-[10px] leading-[10px]">To:</span><div class="flex-1 border-b-2 border-[#bcd3f3] flex justify-between pl-[2px] pr-[5px] pt-[4px]"><span class="w-px h-[11px] bg-[#666666]"></span><span class="text-[6.5px] font-medium pt-[6px] leading-[8px] text-[#999999]"><span class="mr-[6px]">Cc</span>Bcc</span></div></div>
          <div class="flex pl-[10px] pr-[8px] h-[23px]"><span class="w-[42px] pt-[10px] leading-[10px]">Subject:</span><div class="flex-1 border-b border-[#ececec] flex justify-end items-start pr-[5px] pt-[9px] leading-[8px] text-[6.5px] text-[#aaaaaa]">Priority<svg class="ml-[2px] mt-[2px] w-[6px] h-[4px]" viewBox="0 0 6 4"><path d="m.5.5 2.500 2.500L5.500.5" fill="none" stroke="#aaaaaa" stroke-width="0.600"/></svg></div></div>
          <div class="mt-[12px] ml-[12px] h-[12px] flex items-center text-[8px] text-[#c4c4c4] whitespace-nowrap">
            <span class="w-[53px] h-[12px] bg-[#f4f4f4] rounded-[2px] border border-[#e8e8e8] flex justify-end items-center pr-[2px]"><svg class="w-[5px] h-[8px]"><use href="#i-updown"/></svg></span>
            <span class="ml-[2px] w-[25px] h-[12px] bg-[#f4f4f4] rounded-[2px] border border-[#e8e8e8] flex justify-end items-center pr-[2px]"><svg class="w-[5px] h-[8px]"><use href="#i-updown"/></svg></span>
            <span class="ml-[5px] w-[16px] underline">A</span>
            <span class="ml-[2px] w-px h-[12px] bg-[#e4e4e4]"></span>
            <span class="ml-[8px] w-[15px] font-bold">B</span>
            <span class="w-[15px] italic">I</span>
            <span class="w-[15px] underline">U</span>
            <span class="w-[15px] line-through">S</span>
            <span class="w-[20px]">∀</span>
            <span class="w-[15px]">X²</span>
            <span class="w-[10px]">X₂</span>
            <span class="ml-[2px] w-px h-[12px] bg-[#e4e4e4]"></span>
            <span class="ml-[6px] w-[15px]">☰</span>
            <span class="w-[14px]">☰</span>
            <span class="text-[#aaaaaa]">•••</span>
          </div>
          <div class="mt-[6px] ml-[8px] mr-[8px] h-[133px] bg-[#f8f8f8] pr-[8px] pb-[8px]"><div class="w-full h-full bg-white border-r border-b border-[#f0f0f0]"></div></div>
          <div class="mt-[3px] pr-[13px] text-right leading-[10px] text-[7px] text-[#777777]">Draft saved just now</div>
        </div>
      </div>
    </div>
  </div>

  <!-- connector arrows -->
  <svg class="absolute left-0 top-0 pointer-events-none" width="2000" height="1150" viewBox="0 0 2000 1150">
    <g fill="none" stroke="#1e1e1e" stroke-width="4" stroke-linecap="round" stroke-linejoin="round">
      <path d="M149 657H230Q258 657 258 629V213Q258 183 288 183H308"/>
      <path d="M292 167 310 183 292 199"/>
      <path d="M1009 311H1052Q1079 311 1079 284V252Q1079 225 1106 225H1140"/>
      <path d="M1124 208 1142 224.500 1124 241"/>
    </g>
  </svg>
</div>
</body>
</html>
